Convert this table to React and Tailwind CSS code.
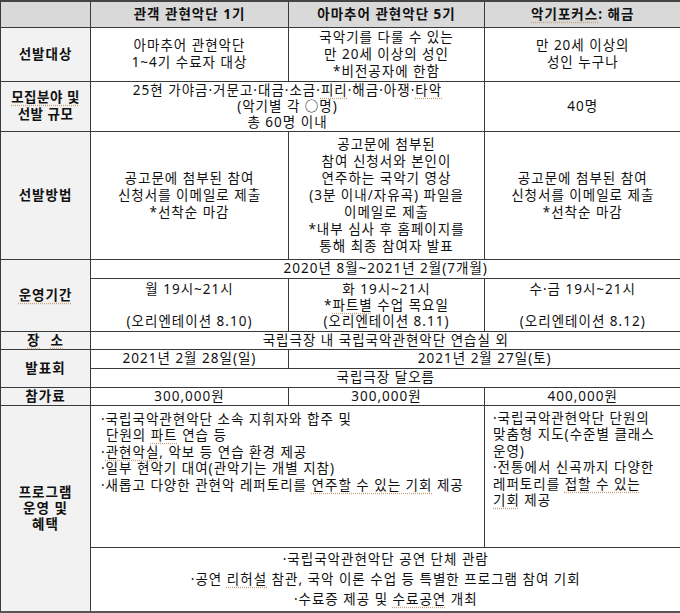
import React from 'react';

const line = 'border border-[#3a3a3a]';
const label = `${line} bg-[#f2f2f2] font-bold text-center align-middle`;
const cell = `${line} text-center align-middle`;
const sq = 'underline decoration-dotted decoration-[#c9a27e] underline-offset-[3px]';

function Lines({ items, className = '' }) {
  return (
    <div className={className}>
      {items.map((t, i) => (
        <div key={i}>{t === '' ? '\u00a0' : t}</div>
      ))}
    </div>
  );
}

export default function App() {
  return (
    <div className="w-[680px] h-[613px] bg-white font-['Noto_Sans','Noto_Sans_CJK_KR',sans-serif] text-[13.5px] tracking-[1px] leading-[17px] text-[#111]">
      <table className="w-[680px] table-fixed border-collapse border-t-2 border-t-[#444] border-b-2 border-b-[#555]">
        <colgroup>
          <col className="w-[90px]" />
          <col className="w-[198px]" />
          <col className="w-[196px]" />
          <col className="w-[196px]" />
        </colgroup>
        <tbody>
          {/* 머리글 */}
          <tr className="h-[26px] bg-[#d9d9d9] font-bold">
            <td className={`${line} border-t-0`}></td>
            <td className={`${cell} border-t-0`}>관객 관현악단 1기</td>
            <td className={`${cell} border-t-0`}>아마추어 관현악단 5기</td>
            <td className={`${cell} border-t-0 border-r-0`}>
              <span className={sq}>악기포커스</span>: 해금
            </td>
          </tr>

          {/* 선발대상 */}
          <tr className="h-[54px]">
            <td className={label}>선발대상</td>
            <td className={cell}>
              <Lines items={['아마추어 관현악단', '1~4기 수료자 대상']} />
            </td>
            <td className={cell}>
              <Lines items={['국악기를 다룰 수 있는', '만 20세 이상의 성인', '*비전공자에 한함']} />
            </td>
            <td className={`${cell} border-r-0`}>
              <Lines items={['만 20세 이상의', '성인 누구나']} />
            </td>
          </tr>

          {/* 모집분야 */}
          <tr className="h-[50px]">
            <td className={`${label} tracking-[0.5px]`}>
              <div className={`${sq} leading-[17px]`}>모집분야 및</div>
              <div>선발 규모</div>
            </td>
            <td className={cell} colSpan={2}>
              <div className="leading-[16px]">
                <div>
                  25현 가야금·거문고·대금·소금·<span className={sq}>피리</span>·해금·아쟁·<span className={sq}>타악</span>
                </div>
                <div>(악기별 각 ○명)</div>
                <div>총 60명 이내</div>
              </div>
            </td>
            <td className={`${cell} border-r-0`}>40명</td>
          </tr>

          {/* 선발방법 */}
          <tr className="h-[128px]">
            <td className={label}>선발방법</td>
            <td className={cell}>
              <Lines items={['공고문에 첨부된 참여', '신청서를 이메일로 제출', '*선착순 마감']} />
            </td>
            <td className={cell}>
              <Lines
                items={[
                  '공고문에 첨부된',
                  '참여 신청서와 본인이',
                  '연주하는 국악기 영상',
                  '(3분 이내/자유곡) 파일을',
                  '이메일로 제출',
                  '*내부 심사 후 홈페이지를',
                  '통해 최종 참여자 발표',
                ]}
              />
            </td>
            <td className={`${cell} border-r-0`}>
              <Lines items={['공고문에 첨부된 참여', '신청서를 이메일로 제출', '*선착순 마감']} />
            </td>
          </tr>

          {/* 운영기간 */}
          <tr className="h-[19px]">
            <td className={label} rowSpan={2}>
              <span className={sq}>운영기간</span>
            </td>
            <td className={`${cell} border-r-0`} colSpan={3}>
              2020년 8월~2021년 2월(7개월)
            </td>
          </tr>
          <tr className="h-[53px]">
            <td className={cell}>
              <Lines className="leading-[16px]" items={['월 19시~21시', '', '(오리엔테이션 8.10)']} />
            </td>
            <td className={cell}>
              <div className="leading-[16px]">
                <div>화 19시~21시</div>
                <div>
                  *<span className={sq}>파트별</span> 수업 목요일
                </div>
                <div>(오리엔테이션 8.11)</div>
              </div>
            </td>
            <td className={`${cell} border-r-0`}>
              <Lines className="leading-[16px]" items={['수·금 19시~21시', '', '(오리엔테이션 8.12)']} />
            </td>
          </tr>

          {/* 장소 */}
          <tr className="h-[17px]">
            <td className={label}>
              <span className={sq}>
                <span className="mr-[10px]">장</span>소
              </span>
            </td>
            <td className={`${cell} border-r-0`} colSpan={3}>
              국립극장 내 국립국악관현악단 연습실 외
            </td>
          </tr>

          {/* 발표회 */}
          <tr className="h-[19px]">
            <td className={label} rowSpan={2}>
              발표회
            </td>
            <td className={cell}>2021년 2월 28일(일)</td>
            <td className={`${cell} border-r-0`} colSpan={2}>
              2021년 2월 27일(토)
            </td>
          </tr>
          <tr className="h-[19px]">
            <td className={`${cell} border-r-0`} colSpan={3}>
              국립극장 달오름
            </td>
          </tr>

          {/* 참가료 */}
          <tr className="h-[18px]">
            <td className={label}>참가료</td>
            <td className={cell}>300,000원</td>
            <td className={cell}>300,000원</td>
            <td className={`${cell} border-r-0`}>400,000원</td>
          </tr>

          {/* 프로그램 */}
          <tr className="h-[142px]">
            <td className={label} rowSpan={2}>
              <Lines className="leading-[16px]" items={['프로그램', '운영 및', '혜택']} />
            </td>
            <td className={`${line} align-top text-left pl-[10px] pt-[5px]`} colSpan={2}>
              <div className="leading-[16.5px]">
                <div>·국립국악관현악단 소속 지휘자와 합주 및</div>
                <div className="pl-[5px]">
                  단원의 <span className={sq}>파트</span> 연습 등
                </div>
                <div>
                  ·<span className={sq}>관현악실</span>, 악보 등 연습 환경 제공
                </div>
                <div>·일부 현악기 대여(관악기는 개별 지참)</div>
                <div>
                  ·새롭고 다양한 관현악 레퍼토리를 <span className={sq}>연주할 수 있는 기회</span> 제공
                </div>
              </div>
            </td>
            <td className={`${line} border-r-0 align-top text-left pl-[8px] pt-[4px]`}>
              <div className="leading-[16.5px]">
                <div>·국립국악관현악단 단원의</div>
                <div>맞춤형 지도(수준별 클래스</div>
                <div>운영)</div>
                <div>·전통에서 신곡까지 다양한</div>
                <div>
                  레퍼토리를 <span className={sq}>접할 수 있는</span>
                </div>
                <div>
                  <span className={sq}>기회</span> 제공
                </div>
              </div>
            </td>
          </tr>
          <tr className="h-[65px]">
            <td className={`${cell} border-r-0`} colSpan={3}>
              <div className="leading-[20px]">
                <div>·국립국악관현악단 공연 단체 관람</div>
                <div>
                  ·공연 <span className={sq}>리허설</span> 참관, 국악 이론 수업 등 특별한 프로그램 참여 기회
                </div>
                <div>
                  ·수료증 제공 및 <span className={sq}>수료공연</span> 개최
                </div>
              </div>
            </td>
          </tr>
        </tbody>
      </table>
    </div>
  );
}
